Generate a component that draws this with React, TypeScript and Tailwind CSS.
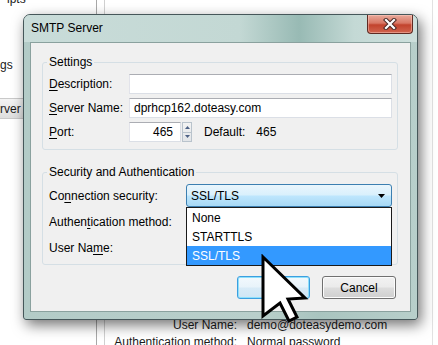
import React from 'react';

function U({ children }: { children: React.ReactNode }) {
  return <span className="underline underline-offset-[2px]">{children}</span>;
}

function TextBox({ value, className = '' }: { value?: string; className?: string }) {
  return (
    <div
      className={`flex h-[20px] items-center border border-[#dbdfe6] border-t-[#abadb3] border-l-[#e2e3ea] bg-white pl-[4px] text-[12px] ${className}`}
    >
      {value}
    </div>
  );
}

function Spinner() {
  return (
    <div className="ml-[1px] flex h-[20px] w-[10px] flex-col border border-[#b9c3cc] bg-[linear-gradient(#f3f3f3,#e2e5e8)]">
      <div className="flex flex-1 items-center justify-center border-b border-[#b9c3cc]">
        <svg width="5" height="3" viewBox="0 0 5 3">
          <path d="M0 3 L2.5 0 L5 3 Z" fill="#4d6185" />
        </svg>
      </div>
      <div className="flex flex-1 items-center justify-center">
        <svg width="5" height="3" viewBox="0 0 5 3">
          <path d="M0 0 L2.5 3 L5 0 Z" fill="#4d6185" />
        </svg>
      </div>
    </div>
  );
}

function CloseButton() {
  return (
    <div className="flex h-[19px] w-[46px] items-center justify-center rounded-b-[4px] border border-t-0 border-[#5e2a22] bg-[linear-gradient(#e9a99b_0%,#d87764_45%,#c2432d_55%,#d1654f_100%)] shadow-[inset_0_0_0_1px_rgba(255,210,200,0.45)]">
      <svg width="14" height="12" viewBox="0 0 14 12">
        <path d="M3 2 L11 10 M11 2 L3 10" stroke="#4a2a26" strokeWidth="4.2" strokeLinecap="square" />
        <path d="M3 2 L11 10 M11 2 L3 10" stroke="#ffffff" strokeWidth="2.2" strokeLinecap="square" />
      </svg>
    </div>
  );
}

function Cursor() {
  return (
    <svg
      className="pointer-events-none absolute left-[260px] top-[254px] z-20"
      width="52"
      height="72"
      viewBox="0 0 52 72"
    >
      <path
        d="M3 3 L45 44 L28 45 L37 63 L29 67 L20 49 L3 62 Z"
        fill="#ffffff"
        stroke="#000000"
        strokeWidth="3"
        strokeLinejoin="miter"
      />
    </svg>
  );
}

function Background() {
  return (
    <div className="flex h-[345px] w-[438px] bg-white text-[12px] leading-[14px] text-[#1b1b1b]">
      <div className="flex w-[96px] flex-col">
        <div className="-mt-[8px] h-[14px] pl-[7px]">ipts</div>
        <div className="mt-[52px] h-[14px]">gs</div>
        <div className="mt-[26px] flex h-[21px] w-[34px] items-center border-y border-[#c9c9c9] bg-[linear-gradient(#f4f4f4,#dedede)]">
          rver
        </div>
      </div>
      <div className="w-[8px] border-l border-[#a8a8a8]" />
      <div className="flex flex-1 flex-col justify-end border-l border-[#d0d0d0]">
        <div className="-mb-[7px] grid grid-cols-[132px_1fr] gap-x-[10px]">
          <div className="h-[17px] text-right">User Name:</div>
          <div className="h-[17px]">demo@doteasydemo.com</div>
          <div className="h-[17px] text-right">Authentication method:</div>
          <div className="h-[17px]">Normal password</div>
        </div>
      </div>
      <div className="w-[6px] border-l border-[#e2e2e2]" />
    </div>
  );
}

function Dialog() {
  return (
    <div className="absolute left-[23px] top-[14px] flex h-[306px] w-[395px] flex-col rounded-t-[7px] rounded-b-[3px] border border-[#46575a] bg-[linear-gradient(90deg,#b3cbc7,#b9cfcb_60%,#a9c4bf_75%,#b8cfcb)] shadow-[3px_5px_14px_rgba(0,0,0,0.55)]">
      <div className="flex h-[27px] items-start justify-between rounded-t-[6px] bg-[linear-gradient(90deg,#c9dcd9_0%,#c3d8d4_55%,#98bab4_70%,#c4d9d5_84%,#cddfdc_100%)] pl-[7px] pr-[4px]">
        <span className="mt-[6px] text-[12px] leading-[14px] text-black">SMTP Server</span>
        <CloseButton />
      </div>
      <div className="mx-[6px] mb-[7px] flex flex-1 flex-col border border-[#8aa19e] bg-[#f0f0f0] pl-[11px] pr-[12px] pt-[12px] text-[12px] leading-[14px] text-black">
        <fieldset className="rounded-[3px] border border-[#d5dfe5] pb-[7px] pl-[6px] pr-[5px]">
          <legend className="-ml-[2px] px-[2px]">Settings</legend>
          <div className="mt-[5px] grid grid-cols-[80px_1fr] items-center gap-y-[4px]">
            <div>
              <U>D</U>escription:
            </div>
            <TextBox />
            <div>
              <U>S</U>erver Name:
            </div>
            <TextBox value="dprhcp162.doteasy.com" />
            <div>
              <U>P</U>ort:
            </div>
            <div className="flex items-center">
              <TextBox value="465" className="w-[52px] justify-end pr-[7px]" />
              <Spinner />
              <span className="ml-[12px]">Default:</span>
              <span className="ml-[11px]">465</span>
            </div>
          </div>
        </fieldset>

        <fieldset className="mt-[15px] rounded-[3px] border border-[#d5dfe5] pb-[6px] pl-[6px] pr-[5px]">
          <legend className="-ml-[2px] px-[2px]">Security and Authentication</legend>
          <div className="mt-[5px] grid grid-cols-[137px_1fr] items-center">
            <div>
              Co<U>n</U>nection security:
            </div>
            <div className="relative">
              <div className="flex h-[23px] items-center justify-between rounded-[3px] border border-[#3c7fb1] bg-[linear-gradient(#eaf6fd_0%,#d9f0fc_48%,#bee6fd_52%,#a7d9f5_100%)] pl-[4px] pr-[6px]">
                <span>SSL/TLS</span>
                <svg width="7" height="4" viewBox="0 0 7 4">
                  <path d="M0 0 L7 0 L3.5 4 Z" fill="#000" />
                </svg>
              </div>
              <div className="absolute left-0 right-0 top-full z-10 flex flex-col border border-[#1a1a1a] bg-white">
                <div className="flex h-[19px] items-center pl-[5px]">None</div>
                <div className="flex h-[19px] items-center pl-[5px]">STARTTLS</div>
                <div className="flex h-[19px] items-center bg-[#3399ff] pl-[5px] text-white">SSL/TLS</div>
              </div>
            </div>
            <div className="mt-[3px]">
              Authen<U>t</U>ication method:
            </div>
            <div className="mt-[3px] h-[23px] rounded-[3px] border border-[#707070] bg-[#ececec]" />
            <div className="mt-[4px]">
              User Na<U>m</U>e:
            </div>
            <TextBox className="mt-[4px] h-[21px]" />
          </div>
        </fieldset>

        <div className="mt-[11px] flex justify-end gap-[12px] pr-[2px]">
          <div className="flex h-[23px] w-[73px] items-center justify-center rounded-[3px] border border-[#3c9fe0] bg-[linear-gradient(#f2f9fd_0%,#e8f3fa_48%,#d8ebf7_52%,#cfe6f5_100%)] shadow-[inset_0_0_0_1px_#8fe0fb]">
            OK
          </div>
          <div className="flex h-[23px] w-[74px] items-center justify-center rounded-[3px] border border-[#707070] bg-[linear-gradient(#f2f2f2_0%,#ebebeb_48%,#dddddd_52%,#cfcfcf_100%)] shadow-[inset_0_0_0_1px_#fcfcfc]">
            Cancel
          </div>
        </div>
      </div>
    </div>
  );
}

export default function App() {
  return (
    <div className="relative h-[345px] w-[438px] overflow-hidden font-['Liberation_Sans',Arial,sans-serif]">
      <Background />
      <Dialog />
      <Cursor />
    </div>
  );
}
